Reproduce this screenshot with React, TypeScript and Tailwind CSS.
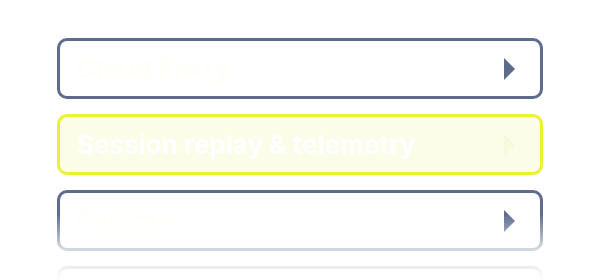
import React from 'react';

type Item = { label: string; active?: boolean };

const items: Item[] = [
  { label: 'Cloud Proxy' },
  { label: 'Session replay & telemetry', active: true },
  { label: 'Params' },
  { label: 'Alerts' },
];

const Arrow: React.FC<{ className?: string }> = ({ className }) => (
  <svg width="11" height="22" viewBox="0 0 11 22" className={className}>
    <path d="M0 0 L11 11 L0 22 Z" fill="currentColor" />
  </svg>
);

export default function App() {
  return (
    <div
      className="w-[600px] h-[280px] bg-white overflow-hidden relative"
      style={{ fontFamily: 'Inter, "Noto Sans", sans-serif' }}
    >
      <div className="flex flex-col gap-[15px] pt-[38px] px-[57px]">
        {items.map((item) => (
          <div
            key={item.label}
            className={`h-[61px] shrink-0 flex items-center justify-between pl-[17px] pr-[25px] rounded-[10px] border-[3px] ${
              item.active
                ? 'border-[#ecf032] bg-[#fbfde9]'
                : 'border-[#5d6b8c] bg-white'
            }`}
          >
            <span
              className={`text-[26px] leading-none font-bold ${
                item.active ? 'text-white' : 'text-[#fffffa]'
              }`}
            >
              {item.label}
            </span>
            <Arrow className={item.active ? 'text-[#f7f9dd]' : 'text-[#5d6b8c]'} />
          </div>
        ))}
      </div>
      {/* bottom fade */}
      <div className="absolute left-0 right-0 top-[214px] bottom-0 bg-gradient-to-b from-white/0 via-white/70 to-white" />
    </div>
  );
}
